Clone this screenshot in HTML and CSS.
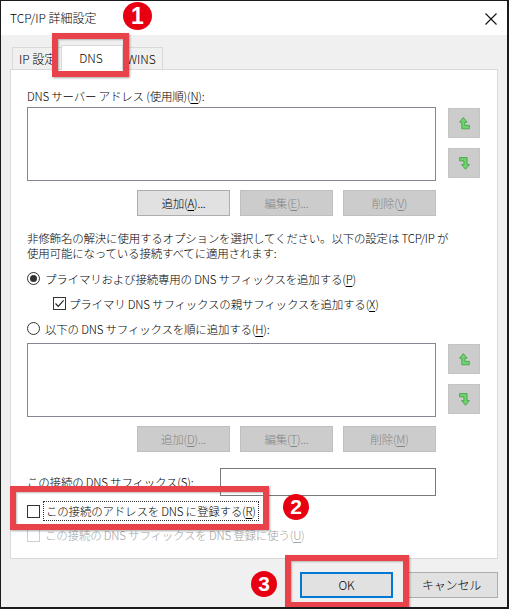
FILE: index.html
```html
<!DOCTYPE html>
<html lang="ja">

<head>
    <meta charset="UTF-8">
    <meta name="viewport" content="width=device-width, initial-scale=1.0">
    <title>TCP/IP 詳細設定</title>
    <link rel="stylesheet" href="styles.css">
</head>

<body>
    <div class="window">
        <div class="titlebar">
            <span class="title">TCP/IP 詳細設定</span>
            <svg class="close" width="12" height="12" viewBox="0 0 12 12">
                <path d="M0.5 0.5 L11.5 11.5 M11.5 0.5 L0.5 11.5" stroke="#111" stroke-width="1.1" fill="none"/>
            </svg>
        </div>

        <div class="content">
            <div class="tabs">
                <div class="tab">IP 設定</div>
                <div class="tab active">DNS</div>
                <div class="tab">WINS</div>
            </div>

            <div class="panel">
                <div class="label first">DNS サーバー アドレス (使用順)(<u>N</u>):</div>
                <div class="list-row">
                    <div class="listbox"></div>
                    <div class="arrows">
                        <div class="arrow-btn">
                            <svg width="11" height="13" viewBox="0 0 11 13">
                                <path d="M0.5 5.2 L4.3 0.6 L8.1 5.2 L5.8 5.2 L5.8 8.4 L10.3 8.4 L10.3 11.8 L2.8 11.8 L2.8 5.2 Z" fill="#6fd36f" stroke="#3d9e3d" stroke-width="0.8"/>
                            </svg>
                        </div>
                        <div class="arrow-btn">
                            <svg width="11" height="13" viewBox="0 0 11 13">
                                <path d="M0.6 0.6 L8.1 0.6 L8.1 7.6 L10.4 7.6 L6.5 12.3 L2.6 7.6 L4.9 7.6 L4.9 3.9 L0.6 3.9 Z" fill="#6fd36f" stroke="#3d9e3d" stroke-width="0.8"/>
                            </svg>
                        </div>
                    </div>
                </div>
                <div class="btn-row">
                    <div class="btn">追加(<u>A</u>)...</div>
                    <div class="btn disabled">編集(<u>E</u>)...</div>
                    <div class="btn disabled">削除(<u>V</u>)</div>
                </div>

                <p class="desc">非修飾名の解決に使用するオプションを選択してください。以下の設定は TCP/IP が<br>使用可能になっている接続すべてに適用されます:</p>

                <div class="option">
                    <span class="radio checked"></span>
                    <span>プライマリおよび接続専用の DNS サフィックスを追加する(<u>P</u>)</span>
                </div>
                <div class="option sub">
                    <span class="check checked">
                        <svg width="11" height="11" viewBox="0 0 11 11"><path d="M1.5 5.5 L4.3 8.3 L9.6 2.4" stroke="#222" stroke-width="1.2" fill="none"/></svg>
                    </span>
                    <span>プライマリ DNS サフィックスの親サフィックスを追加する(<u>X</u>)</span>
                </div>
                <div class="option">
                    <span class="radio"></span>
                    <span>以下の DNS サフィックスを順に追加する(<u>H</u>):</span>
                </div>

                <div class="list-row second">
                    <div class="listbox"></div>
                    <div class="arrows">
                        <div class="arrow-btn">
                            <svg width="11" height="13" viewBox="0 0 11 13">
                                <path d="M0.5 5.2 L4.3 0.6 L8.1 5.2 L5.8 5.2 L5.8 8.4 L10.3 8.4 L10.3 11.8 L2.8 11.8 L2.8 5.2 Z" fill="#6fd36f" stroke="#3d9e3d" stroke-width="0.8"/>
                            </svg>
                        </div>
                        <div class="arrow-btn">
                            <svg width="11" height="13" viewBox="0 0 11 13">
                                <path d="M0.6 0.6 L8.1 0.6 L8.1 7.6 L10.4 7.6 L6.5 12.3 L2.6 7.6 L4.9 7.6 L4.9 3.9 L0.6 3.9 Z" fill="#6fd36f" stroke="#3d9e3d" stroke-width="0.8"/>
                            </svg>
                        </div>
                    </div>
                </div>
                <div class="btn-row">
                    <div class="btn disabled">追加(<u>D</u>)...</div>
                    <div class="btn disabled">編集(<u>T</u>)...</div>
                    <div class="btn disabled">削除(<u>M</u>)</div>
                </div>

                <div class="suffix-row">
                    <span>この接続の DNS サフィックス(<u>S</u>):</span>
                    <div class="textbox"></div>
                </div>
                <div class="option reg">
                    <span class="check"></span>
                    <span class="focus">この接続のアドレスを DNS に登録する(<u>R</u>)</span>
                </div>
                <div class="option reg off">
                    <span class="check"></span>
                    <span>この接続の DNS サフィックスを DNS 登録に使う(<u>U</u>)</span>
                </div>
            </div>

            <div class="footer">
                <div class="btn default">OK</div>
                <div class="btn">キャンセル</div>
            </div>
        </div>

        <!-- annotations -->
        <div class="mark mark-1"></div>
        <div class="mark mark-2"></div>
        <div class="mark mark-3"></div>
        <div class="badge badge-1">1</div>
        <div class="badge badge-2">2</div>
        <div class="badge badge-3">3</div>
    </div>
</body>

</html>
```

FILE: styles.css
```css
* {
    box-sizing: border-box;
}

body {
    margin: 0;
    background: #fff;
    font-family: "Noto Sans CJK JP", "Noto Sans", sans-serif;
    font-size: 11.5px;
    font-weight: 300;
    letter-spacing: -0.2px;
    color: #000;
}

u {
    text-decoration-thickness: 1px;
    text-underline-offset: 2px;
}

.window {
    position: relative;
    width: 509px;
    height: 609px;
    border: 1px solid #1b1b1b;
    border-right-width: 2px;
    border-bottom-width: 2px;
    background: #f0f0f0;
    overflow: hidden;
}

.titlebar {
    height: 34px;
    background: #fff;
    display: flex;
    align-items: center;
    justify-content: space-between;
    padding: 0 10px 0 9px;
}

.title {
    font-size: 12px;
    letter-spacing: 0;
    margin-top: -1px;
}

.close {
    margin-top: 1px;
}

.content {
    padding: 10px 9px 0 9px;
}

/* tabs */
.tabs {
    display: flex;
    align-items: flex-end;
    height: 24px;
    padding-left: 2px;
}

.tab {
    height: 22px;
    border: 1px solid #d9d9d9;
    border-bottom: none;
    background: #f0f0f0;
    padding: 0 6px;
    display: flex;
    align-items: center;
    justify-content: center;
    position: relative;
    font-size: 12px;
    letter-spacing: 0;
}

.tab + .tab {
    margin-left: -1px;
}

.tab.active {
    height: 25px;
    margin: 0 -2px -1px -2px;
    padding: 0 19px 2px 17px;
    background: #fff;
    z-index: 1;
}

.panel {
    width: 488px;
    height: 490px;
    background: #fff;
    border: 1px solid #d9d9d9;
    padding: 0 16px 0 16px;
    display: flex;
    flex-direction: column;
}

.label {
    line-height: 15px;
}

.label.first {
    margin-top: 19px;
}

.list-row {
    display: flex;
    gap: 12px;
    margin-top: 3px;
}

.list-row.second {
    margin-top: 2px;
}

.listbox {
    width: 409px;
    height: 74px;
    border: 1px solid #828790;
    background: #fff;
}

.arrows {
    display: flex;
    flex-direction: column;
    gap: 10px;
    padding-top: 1px;
}

.arrow-btn {
    width: 32px;
    height: 30px;
    background: #cccccc;
    border: 1px solid #c4c4c4;
    display: flex;
    align-items: center;
    justify-content: center;
}

.btn-row {
    width: 409px;
    display: flex;
    justify-content: flex-end;
    gap: 10px;
    margin-top: 9px;
}

.btn {
    width: 93px;
    height: 26px;
    background: #e1e1e1;
    border: 1px solid #adadad;
    display: flex;
    align-items: center;
    justify-content: center;
    padding-bottom: 1px;
}

.btn.disabled {
    background: #cccccc;
    border-color: #bfbfbf;
    color: #858585;
}

.desc {
    margin: 15px 0 0 0;
    line-height: 15px;
}

.option {
    height: 25px;
    display: flex;
    align-items: center;
    gap: 5px;
}

.desc + .option {
    margin-top: 5px;
}

.option.sub {
    padding-left: 26px;
    gap: 3px;
}

.radio {
    width: 13px;
    height: 13px;
    border: 1px solid #333;
    border-radius: 50%;
    display: flex;
    align-items: center;
    justify-content: center;
    flex-shrink: 0;
}

.radio.checked::after {
    content: "";
    width: 7px;
    height: 7px;
    border-radius: 50%;
    background: #333;
}

.check {
    width: 13px;
    height: 13px;
    border: 1px solid #333;
    background: #fff;
    display: flex;
    align-items: center;
    justify-content: center;
    flex-shrink: 0;
}

.suffix-row {
    width: 409px;
    display: flex;
    align-items: center;
    justify-content: space-between;
    margin-top: 16px;
}

.textbox {
    width: 216px;
    height: 28px;
    border: 1px solid #7a7a7a;
}

.option.reg {
    height: 24px;
}

.suffix-row + .option.reg {
    margin-top: 3px;
}

.focus {
    outline: 1px dotted #333;
    outline-offset: 1px;
    line-height: 16px;
    padding: 0 1px;
}

.option.off {
    color: #a3a3a3;
}

.option.off .check {
    border-color: #cfcfcf;
}

.footer {
    display: flex;
    justify-content: flex-end;
    gap: 12px;
    margin-top: 13px;
}

.footer .btn {
    font-size: 12px;
}

.btn.default {
    border: 2px solid #0078d7;
}

/* red annotation frames and numbered badges */
.mark {
    position: absolute;
    border: 6px solid #e8434a;
    box-shadow: 1px 1px 2px rgba(0, 0, 0, 0.35), inset 1px 1px 2px rgba(0, 0, 0, 0.25);
    z-index: 5;
}

.mark-1 {
    left: 51px;
    top: 32px;
    width: 77px;
    height: 44px;
}

.mark-2 {
    left: 9px;
    top: 485px;
    width: 259px;
    height: 44px;
}

.mark-3 {
    left: 284px;
    top: 554px;
    width: 124px;
    height: 53px;
}

.badge {
    position: absolute;
    border-radius: 50%;
    background: #e60012;
    color: #fff;
    font-family: "Liberation Sans", Arial, sans-serif;
    font-weight: bold;
    letter-spacing: 0;
    display: flex;
    align-items: center;
    justify-content: center;
    z-index: 6;
}

.badge-1 {
    left: 122px;
    top: 1px;
    width: 29px;
    height: 28px;
    font-size: 23px;
}

.badge-2 {
    left: 282px;
    top: 493px;
    width: 26px;
    height: 26px;
    font-size: 21px;
}

.badge-3 {
    left: 250px;
    top: 570px;
    width: 26px;
    height: 26px;
    font-size: 21px;
}
```
